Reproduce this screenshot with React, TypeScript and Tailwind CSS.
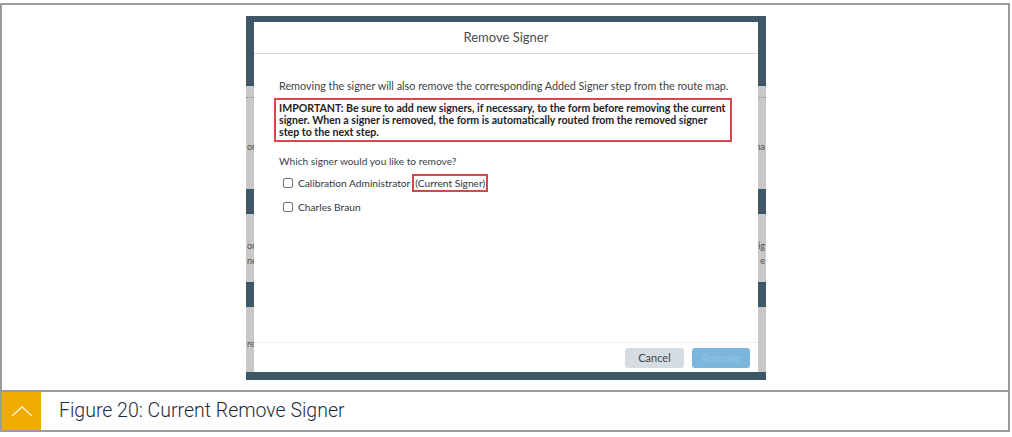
import React from "react";

const DARK = "bg-[#3f5667]";
const GRAY = "bg-[#c8c8c8]";

function Checkbox() {
  return <span className="inline-block h-[10px] w-[10px] shrink-0 rounded-[2px] border border-[#6f7376] bg-white" />;
}

function Modal() {
  return (
    <div className="absolute left-[8px] top-[6px] flex h-[350px] w-[504px] flex-col bg-white font-['Lato',sans-serif] text-[#32363a]">
      <div className="flex h-[32px] items-center justify-center border-b border-[#d8d8d8] text-[13px] text-[#4a4e52]">
        Remove Signer
      </div>
      <div className="flex-1 pl-[20px] pr-[26px] pt-[26px] text-[10.2px] leading-[12px]">
        <p className="pl-[5px] text-[10.8px] text-[#3b3f43]">
          Removing the signer will also remove the corresponding Added Signer step from the route map.
        </p>
        <div className="mt-[6px] border-2 border-[#d4474b] px-[3px] py-[2px] text-[10.6px] font-bold text-[#1f2225]">
          IMPORTANT: Be sure to add new signers, if necessary, to the form before removing the current signer. When a
          signer is removed, the form is automatically routed from the removed signer step to the next step.
        </div>
        <p className="mt-[13px] pl-[5px] text-[#3b3f43]">Which signer would you like to remove?</p>
        <div className="mt-[7px] flex items-center pl-[9px]">
          <Checkbox />
          <span className="ml-[5px]">Calibration Administrator</span>
          <span className="ml-[2px] border-2 border-[#d4474b] px-[1px] py-[1px]">(Current Signer)</span>
        </div>
        <div className="mt-[9px] flex items-center pl-[9px]">
          <Checkbox />
          <span className="ml-[5px]">Charles Braun</span>
        </div>
      </div>
      <div className="flex h-[30px] items-start justify-end gap-[8px] border-t border-[#efefef] pr-[8px] pt-[5px] text-[11px]">
        <button className="h-[20px] w-[59px] rounded-[3px] bg-[#d5dce2] text-[#3e4348]">Cancel</button>
        <button className="h-[20px] w-[58px] rounded-[3px] bg-[#7db6dc] text-[#93c2e2]">Remove</button>
      </div>
    </div>
  );
}

function Screenshot() {
  return (
    <div className="relative h-[364px] w-[520px] overflow-hidden font-['Lato',sans-serif] text-[9px] text-[#4d4d4d]">
      <div className="flex h-full flex-col">
        <div className={`h-[70px] ${DARK}`} />
        <div className={`h-[103px] ${GRAY} pt-[11px]`}>
          <div className="border-t border-dotted border-[#8c8c8c]" />
          <div className="mt-[42px] flex justify-between px-[1px]">
            <span>or</span>
            <span>na</span>
          </div>
        </div>
        <div className={`h-[25px] ${DARK}`} />
        <div className={`h-[68px] ${GRAY} pt-[24px] leading-[15px]`}>
          <div className="flex justify-between px-[1px]">
            <span>on</span>
            <span>ig</span>
          </div>
          <div className="flex justify-between px-[1px]">
            <span>ne</span>
            <span>e</span>
          </div>
        </div>
        <div className={`h-[25px] ${DARK}`} />
        <div className={`h-[65px] ${GRAY} pt-[30px]`}>
          <div className="flex justify-between px-[1px]">
            <span>re</span>
            <span />
          </div>
        </div>
        <div className={`h-[8px] ${DARK}`} />
      </div>
      <Modal />
    </div>
  );
}

export default function App() {
  return (
    <div className="h-[437px] w-[1012px] bg-white pt-[3px]">
      <div className="w-[1010px] border-2 border-[#9c9c9c]">
        <div className="h-[385px] pl-[244px] pt-[11px]">
          <Screenshot />
        </div>
        <div className="flex h-[40px] items-center border-t-2 border-[#9c9c9c]">
          <div className="flex h-full w-[39px] items-center justify-center bg-[#f0ab00]">
            <svg width="24" height="14" viewBox="0 0 24 14">
              <polyline points="2,12 12,3 22,12" fill="none" stroke="#fff4d6" strokeWidth="1.4" />
            </svg>
          </div>
          <span className="ml-[18px] font-['Roboto',sans-serif] text-[19.5px] font-light text-[#1d2c3c]">
            Figure 20: Current Remove Signer
          </span>
        </div>
      </div>
    </div>
  );
}
